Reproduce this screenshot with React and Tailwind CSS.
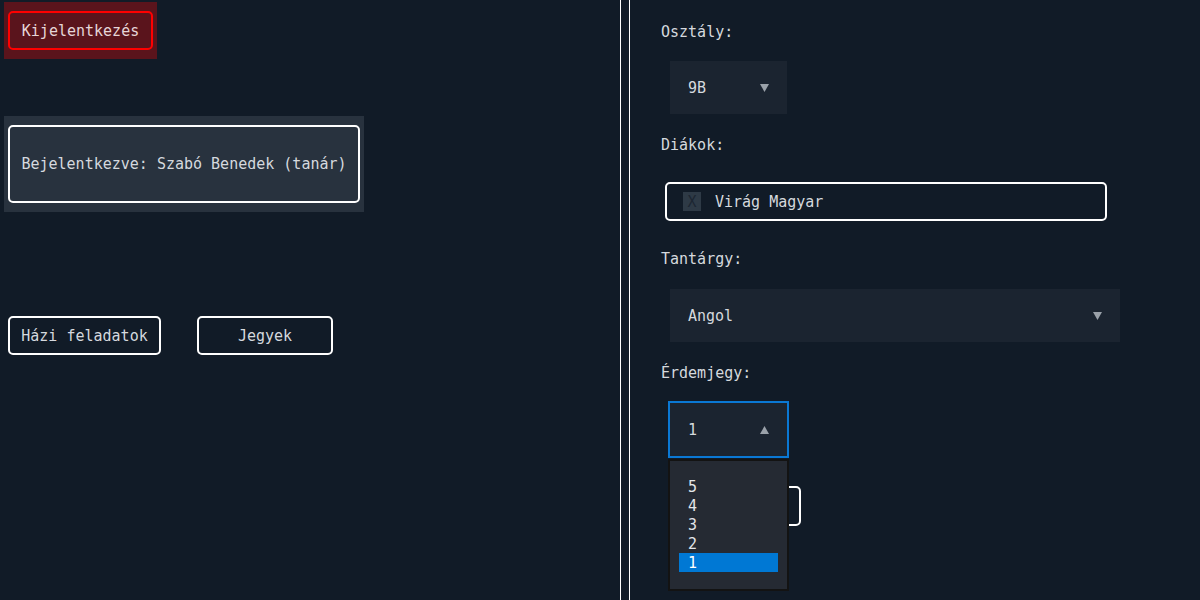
import React from "react";

const font = { fontFamily: '"DejaVu Sans Mono", "Liberation Mono", monospace' };

function Down() {
  return (
    <svg width="9" height="8" viewBox="0 0 9 8" className="shrink-0">
      <polygon points="0,0 9,0 4.5,8" fill="#9aa1a9" />
    </svg>
  );
}
function Up() {
  return (
    <svg width="9" height="8" viewBox="0 0 9 8" className="shrink-0">
      <polygon points="0,8 9,8 4.5,0" fill="#9aa1a9" />
    </svg>
  );
}

export default function App() {
  return (
    <div
      className="flex h-[600px] w-[1200px] overflow-hidden bg-[#111b27] text-[15px] leading-[18px] text-[#d5d9de]"
      style={font}
    >
      {/* Left panel */}
      <div className="flex h-full w-[621px] shrink-0 flex-col items-start border-r border-white">
        <div className="mt-[2px] ml-[4px] bg-[#5a141c] px-[4px] py-[9px]">
          <div className="flex h-[39px] w-[145px] items-center justify-center rounded-[5px] border-2 border-[#ff0000] text-[#e6d6d8]">
            Kijelentkezés
          </div>
        </div>

        <div className="mt-[57px] ml-[4px] bg-[#28323e] px-[4px] py-[9px]">
          <div className="flex h-[78px] w-[352px] items-center justify-center rounded-[5px] border-2 border-white">
            Bejelentkezve: Szabó Benedek (tanár)
          </div>
        </div>

        <div className="mt-[104px] ml-[8px] flex gap-[36px]">
          <div className="flex h-[39px] w-[153px] items-center justify-center rounded-[5px] border-2 border-white">
            Házi feladatok
          </div>
          <div className="flex h-[39px] w-[136px] items-center justify-center rounded-[5px] border-2 border-white">
            Jegyek
          </div>
        </div>
      </div>

      {/* Right panel */}
      <div className="ml-[8px] flex h-full flex-1 flex-col items-start border-l border-white pl-[31px]">
        <div className="mt-[23px]">Osztály:</div>
        <div className="mt-[20px] ml-[9px] flex h-[53px] w-[117px] items-center justify-between bg-[#1b2430] pl-[18px] pr-[18px]">
          <span>9B</span>
          <Down />
        </div>

        <div className="mt-[22px]">Diákok:</div>
        <div className="mt-[28px] ml-[4px] flex h-[39px] w-[442px] items-center rounded-[5px] border-2 border-white pl-[16px]">
          <div className="flex h-[19px] w-[18px] items-center justify-center bg-[#2e3a46] text-[#1c2632]">X</div>
          <span className="ml-[14px]">Virág Magyar</span>
        </div>

        <div className="mt-[29px]">Tantárgy:</div>
        <div className="mt-[21px] ml-[9px] flex h-[53px] w-[450px] items-center justify-between bg-[#1b2430] pl-[18px] pr-[18px]">
          <span>Angol</span>
          <Down />
        </div>

        <div className="mt-[22px]">Érdemjegy:</div>
        <div className="relative mt-[21px] ml-[9px]">
          <div className="flex h-[53px] w-[117px] items-center justify-between bg-[#1b2430] pl-[18px] pr-[18px] outline-2 outline-[#0a78d4]">
            <span>1</span>
            <Up />
          </div>
          <div className="absolute left-[-2px] top-[56px] z-10 w-[121px] border-2 border-[#131313] bg-[#252a33] px-[9px] pt-[16px] pb-[17px]">
            {["5", "4", "3", "2", "1"].map((v) => (
              <div
                key={v}
                className={
                  v === "1"
                    ? "flex h-[19px] items-center bg-[#0078d4] pl-[9px] text-white"
                    : "flex h-[19px] items-center pl-[9px] text-[#e3e6ea]"
                }
              >
                {v}
              </div>
            ))}
          </div>
        </div>
        <div className="mt-[30px] ml-[9px] flex h-[40px] w-[131px] items-center justify-center rounded-[5px] border-2 border-white">
          Mentés
        </div>
      </div>
    </div>
  );
}
